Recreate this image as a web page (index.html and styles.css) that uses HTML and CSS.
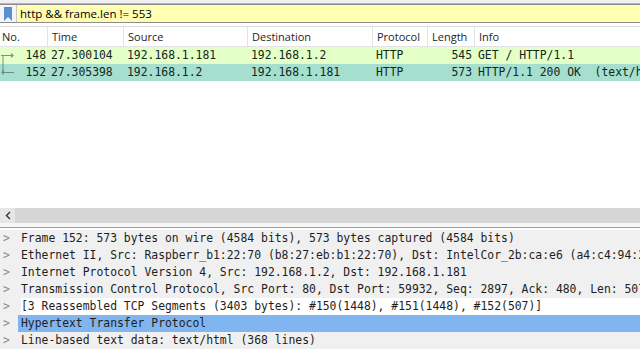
FILE: index.html
```html
<!DOCTYPE html>
<html lang="en">
<head>
    <meta charset="UTF-8">
    <title>Wireshark</title>
    <link rel="stylesheet" href="styles.css">
</head>
<body>
    <div class="top-strip"></div>

    <div class="filter-bar">
        <div class="bookmark">
            <svg width="8" height="14" viewBox="0 0 8 14"><path d="M0 0H8V14L4 10L0 14Z" fill="#5a8fd2"/></svg>
        </div>
        <div class="filter-text">http &amp;&amp; frame.len != 553</div>
    </div>

    <div class="packet-list">
        <div class="packet-header">
            <div class="cell">No.</div>
            <div class="cell">Time</div>
            <div class="cell">Source</div>
            <div class="cell">Destination</div>
            <div class="cell">Protocol</div>
            <div class="cell">Length</div>
            <div class="cell">Info</div>
        </div>
        <div class="packet-row http">
            <div class="cell num"><svg class="rel" width="16" height="17" viewBox="0 0 16 17"><path d="M3 8.5V17M1 8.5H13" stroke="#8a8a8a" fill="none"/><path d="M11 6L14 8.5L11 11Z" fill="#8a8a8a"/></svg>148</div>
            <div class="cell">27.300104</div>
            <div class="cell">192.168.1.181</div>
            <div class="cell">192.168.1.2</div>
            <div class="cell">HTTP</div>
            <div class="cell right">545</div>
            <div class="cell info">GET / HTTP/1.1</div>
        </div>
        <div class="packet-row selected">
            <div class="cell num"><svg class="rel" width="16" height="17" viewBox="0 0 16 17"><path d="M3 0V8.5M2 8.5H14" stroke="#6e8a84" fill="none"/><path d="M4 6L1 8.5L4 11Z" fill="#6e8a84"/></svg>152</div>
            <div class="cell">27.305398</div>
            <div class="cell">192.168.1.2</div>
            <div class="cell">192.168.1.181</div>
            <div class="cell">HTTP</div>
            <div class="cell right">573</div>
            <div class="cell info">HTTP/1.1 200 OK  (text/html)</div>
        </div>
    </div>

    <div class="hscroll">
        <div class="hscroll-btn">
            <svg width="6" height="9" viewBox="0 0 6 9"><path d="M5 1L1.5 4.5L5 8" stroke="#333" stroke-width="1.4" fill="none"/></svg>
        </div>
    </div>

    <div class="splitter"></div>

    <div class="details">
        <div class="tree-row"><span class="exp">&gt;</span>Frame 152: 573 bytes on wire (4584 bits), 573 bytes captured (4584 bits)</div>
        <div class="tree-row"><span class="exp">&gt;</span>Ethernet II, Src: Raspberr_b1:22:70 (b8:27:eb:b1:22:70), Dst: IntelCor_2b:ca:e6 (a4:c4:94:2b:ca:e6)</div>
        <div class="tree-row"><span class="exp">&gt;</span>Internet Protocol Version 4, Src: 192.168.1.2, Dst: 192.168.1.181</div>
        <div class="tree-row"><span class="exp">&gt;</span>Transmission Control Protocol, Src Port: 80, Dst Port: 59932, Seq: 2897, Ack: 480, Len: 507</div>
        <div class="tree-row hover"><span class="exp">&gt;</span>[3 Reassembled TCP Segments (3403 bytes): #150(1448), #151(1448), #152(507)]</div>
        <div class="tree-row active"><span class="exp">&gt;</span>Hypertext Transfer Protocol</div>
        <div class="tree-row"><span class="exp">&gt;</span>Line-based text data: text/html (368 lines)</div>
    </div>
</body>
</html>
```

FILE: styles.css
```css
body {
    margin: 0;
    width: 640px;
    height: 360px;
    overflow: hidden;
    background-color: white;
    font-family: "Open Sans", "Noto Sans", sans-serif;
    font-size: 11px;
    color: #1e1e1e;
}
.top-strip {
    height: 3px;
    background-color: #f0f0f0;
    border-bottom: 1px solid #b4b4b4;
}
.filter-bar {
    display: flex;
    height: 17px;
    border: 1px solid #8c8c8c;
    border-left: none;
    border-right: none;
    background-color: #ffffb4;
}
.bookmark {
    width: 16px;
    display: flex;
    align-items: center;
    justify-content: center;
    background-color: #f3f5fa;
    border-right: 1px solid #c8c8c8;
    padding-top: 1px;
}
.filter-text {
    padding-left: 3px;
    line-height: 17px;
    font-size: 11.5px;
    color: #000;
}
.packet-list {
    height: 181px;
    margin-top: 3px;
    border-top: 1px solid #dcdcdc;
    overflow: hidden;
}
.packet-header, .packet-row {
    display: grid;
    grid-template-columns: 47px 76px 124px 125px 55px 47px 1fr;
    white-space: nowrap;
}
.packet-header {
    height: 19px;
    line-height: 19px;
    border-bottom: 1px solid #e4e4e4;
}
.packet-header .cell {
    padding-left: 4px;
    border-left: 1px solid #e4e4e4;
}
.packet-header .cell:first-child {
    padding-left: 2px;
    border-left: none;
}
.packet-row {
    height: 17px;
    line-height: 17px;
    font-family: "DejaVu Sans Mono", monospace;
    font-size: 11.4px;
    color: #12271f;
}
.packet-row .cell {
    padding-left: 4px;
    overflow: hidden;
}
.packet-row .info {
    overflow: visible;
    white-space: pre;
}
.packet-row .num {
    position: relative;
    text-align: right;
    padding-right: 1px;
}
.packet-row .right {
    text-align: right;
    padding-right: 2px;
}
.rel {
    position: absolute;
    left: 0;
    top: 0;
}
.http {
    background-color: #e4ffc7;
}
.selected {
    background-color: #a6dfce;
}
.hscroll {
    height: 15px;
    background-color: #d6d6d6;
    display: flex;
}
.hscroll-btn {
    width: 15px;
    display: flex;
    align-items: center;
    justify-content: center;
    background-color: #e6e6e6;
}
.splitter {
    height: 4px;
    background-color: #f7f7f7;
    border-bottom: 1px solid #a0a0a0;
}
.details {
    padding-top: 2px;
    background-color: white;
}
.tree-row {
    height: 17px;
    line-height: 17px;
    padding-left: 21px;
    position: relative;
    background-color: #f0f0f0;
    white-space: nowrap;
    font-family: "DejaVu Sans Mono", monospace;
    font-size: 11.4px;
    color: #1e1e1e;
}
.tree-row.hover {
    background: linear-gradient(to right, #f0f0f0 0, #f0f0f0 21px, #ffffff 21px);
}
.tree-row.active {
    background: linear-gradient(to right, #f0f0f0 0, #f0f0f0 18px, #80b5ef 18px);
}
.exp {
    position: absolute;
    left: 3px;
    color: #8c8c8c;
}
```
